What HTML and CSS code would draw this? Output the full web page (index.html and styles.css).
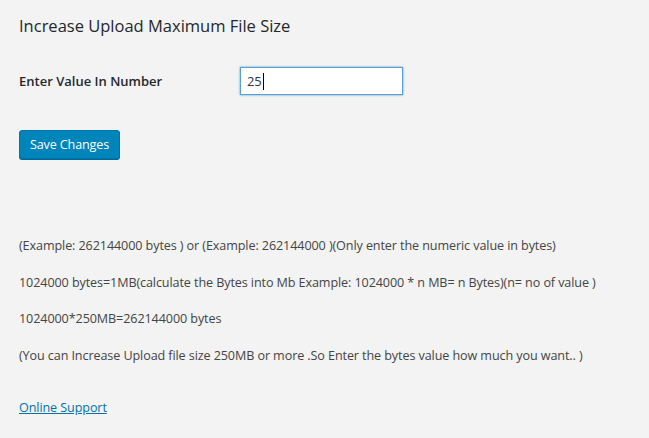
FILE: index.html
```html
<!DOCTYPE html>
<html>
<head>
<meta charset="utf-8">
<link rel="stylesheet" href="styles.css">
</head>
<body>
<div class="wrap">
  <h2 class="title">Increase Upload Maximum File Size</h2>
  <form class="settings">
    <div class="row">
      <label class="label" for="val">Enter Value In Number</label>
      <div class="field"><input id="val" class="input" type="text" value="25"><span class="caret"></span></div>
    </div>
    <button type="button" class="button">Save Changes</button>
  </form>
  <div class="notes">
    <p>(Example: 262144000 bytes ) or (Example: 262144000 )(Only enter the numeric value in bytes)</p>
    <p>1024000 bytes=1MB(calculate the Bytes into Mb Example: 1024000 * n MB= n Bytes)(n= no of value )</p>
    <p>1024000*250MB=262144000 bytes</p>
    <p>(You can Increase Upload file size 250MB or more .So Enter the bytes value how much you want.. )</p>
  </div>
  <a class="link" href="#">Online Support</a>
</div>
</body>
</html>
```

FILE: styles.css
```css
html, body {
  margin: 0;
  padding: 0;
  background: #f3f3f3;
}
body {
  font-family: "Open Sans", "Noto Sans", sans-serif;
  color: #444;
  font-size: 12.6px;
  letter-spacing: -0.1px;
}
.wrap {
  padding: 14px 19px 0 19px;
}
.title {
  margin: 0;
  font-size: 16.5px;
  font-weight: 400;
  color: #23282d;
  line-height: 24px;
  letter-spacing: 0;
}
.settings {
  margin-top: 29px;
}
.row {
  display: flex;
  align-items: center;
}
.label {
  width: 221px;
  font-size: 13px;
  font-weight: 600;
  color: #23282d;
  letter-spacing: 0;
}
.field {
  position: relative;
}
.input {
  box-sizing: border-box;
  width: 163px;
  height: 28px;
  margin: 0;
  border: 1px solid #5b9dd9;
  box-shadow: 0 0 2px rgba(30,140,190,.8);
  background: #fff;
  font-family: inherit;
  font-size: 13px;
  letter-spacing: -0.3px;
  color: #32373c;
  padding: 0 6px;
  outline: none;
}
.caret {
  position: absolute;
  left: 23px;
  top: 6px;
  width: 1px;
  height: 17px;
  background: #000;
}
.button {
  display: block;
  margin-top: 35px;
  height: 29px;
  padding: 0 10px;
  background: #0085ba;
  border: 1px solid #0073aa;
  border-radius: 3px;
  color: #fff;
  font-family: inherit;
  font-size: 12.6px;
  letter-spacing: -0.15px;
  box-shadow: 0 1px 0 #006799;
}
.notes {
  margin-top: 77px;
}
.notes p {
  margin: 0 0 16.5px 0;
  line-height: 20px;
}
.link {
  display: inline-block;
  margin-top: 16px;
  color: #0073aa;
  line-height: 20px;
}
```
